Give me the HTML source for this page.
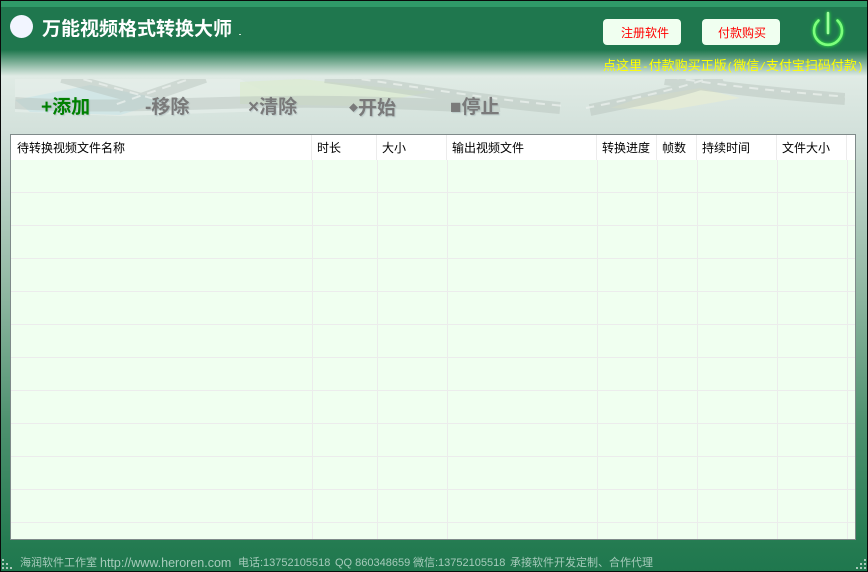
<!DOCTYPE html>
<html lang="zh"><head><meta charset="utf-8"><title>万能视频格式转换大师</title>
<style>
*{box-sizing:border-box;margin:0;padding:0}
html,body{width:868px;height:572px;overflow:hidden}
body{position:relative;font-family:"Liberation Sans","Noto Sans CJK SC",sans-serif;background:linear-gradient(180deg,#1f774e 0,#1f774e 50px,#e0ebe5 76px,#d3e1db 130px,#8cb59f 300px,#4f9270 420px,#247b51 545px,#1f774e 572px)}
.a{position:absolute;white-space:nowrap}
.edge{position:absolute;background:#0a0a0a}
.tool{position:absolute;top:95px;font-size:19px;line-height:26px;font-weight:bold;color:#7a7a7a;white-space:nowrap;text-shadow:1px 1px 1px rgba(120,140,150,.3)}
.btn{position:absolute;top:19px;width:78px;height:26px;background:#f0fff0;border-radius:4px;color:#f00;font-size:12px;line-height:28px;white-space:nowrap}
#tbl{position:absolute;left:10px;top:134px;width:846px;height:406px;border:1px solid #7f8a8a;background:#f0fff0;overflow:hidden}
#head{position:absolute;left:0;top:0;width:100%;height:25px;background:#fff}
.h{position:absolute;top:0;font-size:12px;line-height:27px;color:#000;white-space:nowrap}
.v{position:absolute;top:0;bottom:0;width:1px;background:#ececec}
.r{position:absolute;left:0;right:0;height:1px;background:#ececec}
.foot{position:absolute;top:555px;font-size:11px;line-height:16px;color:#a6cbbb;white-space:nowrap}
.foot b{font-weight:normal;font-size:12.5px}
.m{font-family:"Liberation Mono",monospace;font-size:11px}
</style></head>
<body>
<div class="a" style="left:0;top:1px;width:868px;height:6px;background:#2f9a68"></div>

<svg class="a" style="left:0;top:79px" width="868" height="42" viewBox="0 79 868 42">
<defs><clipPath id="c"><rect x="15" y="79" width="830" height="40"/></clipPath></defs>
<g clip-path="url(#c)">
<polygon points="15,79 240,79 300,110 120,116 15,112" fill="#e6eee9" opacity=".7"/>
<polygon points="15,100 90,85 170,100 120,115 30,112" fill="#cfe5e6" opacity=".9"/>
<polygon points="240,82 300,79 430,92 360,106 240,104" fill="#dcebd2" opacity=".8"/>
<polygon points="640,98 700,88 740,98 670,110 610,108" fill="#e6ecd4" opacity=".8"/>
<g fill="none" stroke="#b6c2bb" stroke-width="12" opacity=".45">
<path d="M62 77L170 107"/>
<path d="M205 77L118 107"/>
<path d="M15 103C120 110 220 100 340 102S460 108 500 106"/>
<path d="M325 77C390 85 470 100 560 108"/>
<path d="M665 79C720 88 780 94 845 99"/>
<path d="M722 77C680 92 640 100 590 110"/>
</g>
<g fill="none" stroke="#eef3f0" stroke-width="2" stroke-dasharray="9 7" opacity=".7">
<path d="M68 75L176 105"/>
<path d="M201 75L114 105"/>
<path d="M330 75C395 83 475 98 565 106"/>
<path d="M670 77C725 86 785 92 850 97"/>
<path d="M718 75C676 90 636 98 586 108"/>
</g>
</g>
</svg>

<div class="edge" style="left:0;top:0;width:868px;height:1px"></div>
<div class="edge" style="left:0;top:0;width:1px;height:572px"></div>
<div class="edge" style="left:867px;top:0;width:1px;height:572px"></div>
<div class="edge" style="left:0;top:571px;width:868px;height:1px"></div>

<div class="a" style="left:10px;top:15px;width:23px;height:23px;border-radius:50%;background:#f2f5ff"></div>
<div class="a" style="left:42px;top:16px;font-size:19px;line-height:28px;font-weight:bold;color:#fff">万能视频格式转换大师</div>
<div class="a" style="left:239px;top:34px;width:2px;height:1px;background:#cfe3d8"></div>

<div class="btn" style="left:603px;padding-left:18px">注册软件</div>
<div class="btn" style="left:702px;padding-left:16px">付款购买</div>

<svg class="a" style="left:808px;top:8px;filter:drop-shadow(0 0 1.5px #2dff3a)" width="40" height="40" viewBox="0 0 40 40">
<path d="M10.5 12.5A14 14 0 1 0 29.5 12.5" fill="none" stroke="#7dff7d" stroke-width="2.6" stroke-linecap="round"/>
<path d="M20 5V25" fill="none" stroke="#9dff9d" stroke-width="2.6" stroke-linecap="round"/>
</svg>

<div class="a" style="left:603px;top:57px;font-size:13px;line-height:18px;color:#ffff00">点这里<span class="m">-</span>付款购买正版<span class="m">(</span>微信<span class="m">/</span>支付宝扫码付款<span class="m">)</span></div>

<div class="tool" style="left:41px;color:#008000">+添加</div>
<div class="tool" style="left:145px">-移除</div>
<div class="tool" style="left:248px">×清除</div>
<div class="tool" style="left:349px"><span style="font-size:9px;vertical-align:3px">◆</span>开始</div>
<div class="tool" style="left:450px">■停止</div>

<div id="tbl">
<div class="r" style="top:57px"></div><div class="r" style="top:90px"></div><div class="r" style="top:123px"></div><div class="r" style="top:156px"></div><div class="r" style="top:189px"></div><div class="r" style="top:222px"></div><div class="r" style="top:255px"></div><div class="r" style="top:288px"></div><div class="r" style="top:321px"></div><div class="r" style="top:354px"></div><div class="r" style="top:387px"></div>
<div class="v" style="left:301px"></div><div class="v" style="left:366px"></div><div class="v" style="left:436px"></div><div class="v" style="left:586px"></div><div class="v" style="left:646px"></div><div class="v" style="left:686px"></div><div class="v" style="left:766px"></div><div class="v" style="left:836px"></div>
<div id="head">
<div class="v" style="left:300px"></div><div class="v" style="left:365px"></div><div class="v" style="left:435px"></div><div class="v" style="left:585px"></div><div class="v" style="left:645px"></div><div class="v" style="left:685px"></div><div class="v" style="left:765px"></div><div class="v" style="left:835px"></div>
<div class="h" style="left:6px">待转换视频文件名称</div>
<div class="h" style="left:306px">时长</div>
<div class="h" style="left:371px">大小</div>
<div class="h" style="left:441px">输出视频文件</div>
<div class="h" style="left:591px">转换进度</div>
<div class="h" style="left:651px">帧数</div>
<div class="h" style="left:691px">持续时间</div>
<div class="h" style="left:771px">文件大小</div>
</div>
</div>

<svg class="a" style="left:1px;top:558px" width="12" height="12" fill="#a9c9ba"><rect x="1" y="1" width="2" height="2"/><rect x="1" y="5" width="2" height="2"/><rect x="5" y="5" width="2" height="2"/><rect x="1" y="9" width="2" height="2"/><rect x="5" y="9" width="2" height="2"/><rect x="9" y="9" width="2" height="2"/></svg>
<svg class="a" style="left:855px;top:558px" width="12" height="12" fill="#a9c9ba"><rect x="9" y="1" width="2" height="2"/><rect x="5" y="5" width="2" height="2"/><rect x="9" y="5" width="2" height="2"/><rect x="1" y="9" width="2" height="2"/><rect x="5" y="9" width="2" height="2"/><rect x="9" y="9" width="2" height="2"/></svg>

<div class="foot" style="left:20px">海润软件工作室</div>
<div class="foot" style="left:100px"><b>http://www.heroren.com</b></div>
<div class="foot" style="left:238px">电话:13752105518</div>
<div class="foot" style="left:335px">QQ 860348659</div>
<div class="foot" style="left:413px">微信:13752105518</div>
<div class="foot" style="left:510px">承接软件开发定制、合作代理</div>
</body></html>
